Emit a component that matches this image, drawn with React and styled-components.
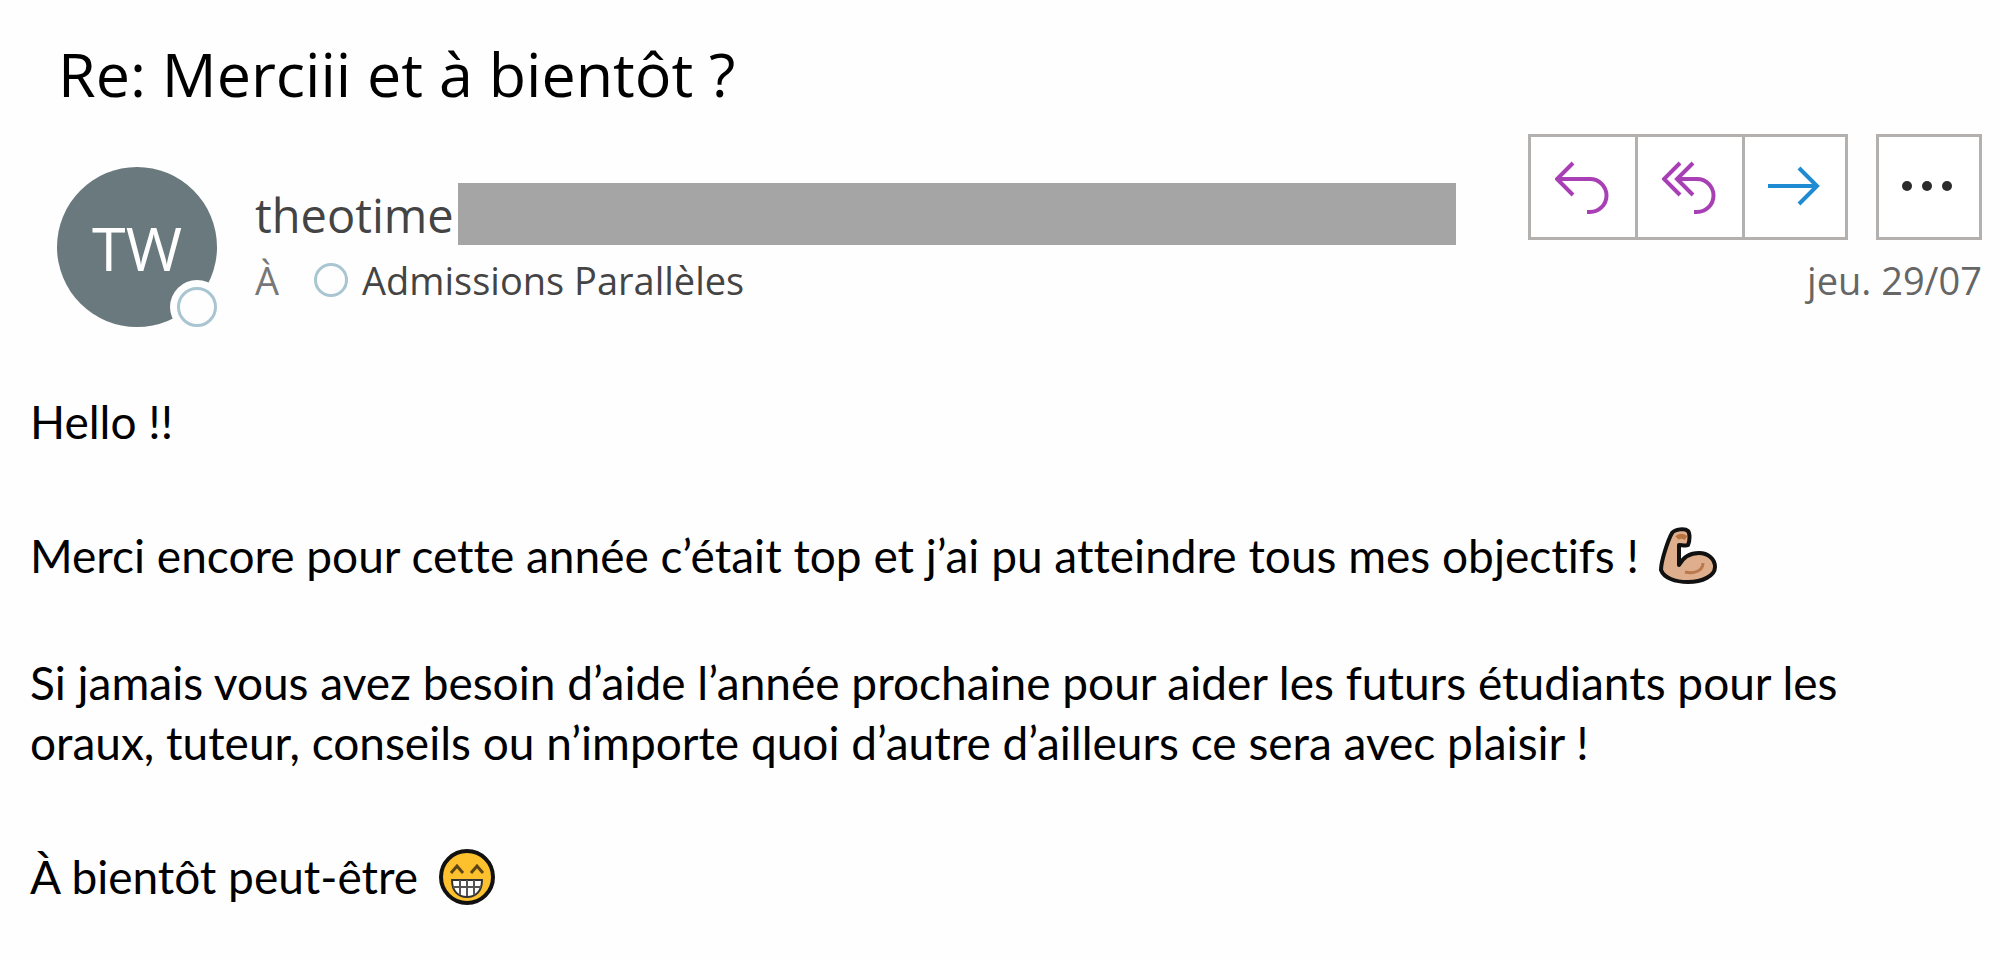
import React from "react";
import styled, { createGlobalStyle } from "styled-components";

const GlobalStyle = createGlobalStyle`
  * {
    box-sizing: border-box;
  }

  body {
    margin: 0;
    background: #fefefe;
    font-family: "Open Sans", "Noto Sans", sans-serif;
  }
`;

const Mail = styled.main`
  padding: 32px 17px 32px 30px;
`;

const Subject = styled.h1`
  margin: 0 0 0 28px;
  color: #000;
  font-size: 61px;
  font-weight: 400;
  line-height: 84px;
`;

const MailHeader = styled.header`
  display: flex;
  align-items: flex-start;
  margin-top: 18px;
  padding-left: 27px;
`;

const Avatar = styled.div`
  position: relative;
  display: flex;
  flex: none;
  align-items: center;
  justify-content: center;
  width: 160px;
  height: 160px;
  margin-top: 33px;
  border-radius: 50%;
  background: #69797e;
  color: #fff;
  font-size: 61px;
  font-weight: 400;
`;

const Presence = styled.span`
  flex: none;
  width: ${(props) => props.$size}px;
  height: ${(props) => props.$size}px;
  border: 3px solid #a9c5d2;
  border-radius: 50%;
  background: #fefefe;
`;

const AvatarPresence = styled(Presence)`
  position: absolute;
  right: 0;
  bottom: 0;
  box-shadow: 0 0 0 7px #fefefe;
`;

const Sender = styled.div`
  flex: 1;
  min-width: 0;
  margin: 49px 72px 0 38px;
`;

const From = styled.div`
  display: flex;
  align-items: flex-start;
  color: #444;
  font-size: 47px;
  line-height: 65px;
`;

const Redacted = styled.span`
  flex: 1;
  height: 62px;
  margin-left: 4px;
  background: #a5a5a5;
`;

const Recipients = styled.div`
  display: flex;
  align-items: center;
  color: #777;
  font-size: 38px;
  line-height: 64px;

  ${Presence} {
    margin: 0 14px 0 35px;
  }
`;

const Recipient = styled.span`
  color: #444;
`;

const Side = styled.div`
  display: flex;
  flex: none;
  flex-direction: column;
  align-items: flex-end;
`;

const Actions = styled.div`
  display: flex;
  gap: 28px;
`;

const ActionGroup = styled.div`
  display: flex;
`;

const ActionButton = styled.button`
  display: flex;
  align-items: center;
  justify-content: center;
  width: 106px;
  height: 106px;
  padding: 0;
  border: 3px solid #b3b0ad;
  background: #fff;
  color: ${(props) => props.$color};
  cursor: pointer;

  &:not(:last-child) {
    width: 110px;
  }

  & + & {
    margin-left: -3px;
  }
`;

const SentDate = styled.time`
  color: #666;
  font-size: 38px;
  line-height: 80px;
`;

const Body = styled.article`
  padding: 65px 40px 0 0;
  color: #000;
  font-family: Lato, "Open Sans", sans-serif;
  font-size: 46px;
  font-variant-ligatures: none;
  line-height: 60px;
`;

const Paragraph = styled.p`
  margin: ${(props) => (props.$withEmoji ? 74 : 67)}px 0 0;

  &:first-child {
    margin-top: 0;
  }
`;

const Emoji = styled.svg`
  width: 58px;
  height: 58px;
  margin: -10px 0 -12px 8px;
  vertical-align: baseline;
`;

const ReplyIcon = () => (
  <svg width="56" height="56" viewBox="0 0 56 56" fill="none" stroke="currentColor" strokeWidth="4">
    <path d="M18 4 2 20l16 16M2 20h33a16.5 16.5 0 0 1 0 33h-3" />
  </svg>
);

const ReplyAllIcon = () => (
  <svg width="56" height="56" viewBox="0 0 56 56" fill="none" stroke="currentColor" strokeWidth="4">
    <path d="M18 4 2 20l16 16M31 4 15 20l16 16M15 20h20a16.5 16.5 0 0 1 0 33h-3" />
  </svg>
);

const ForwardIcon = () => (
  <svg width="56" height="56" viewBox="0 0 56 56" fill="none" stroke="currentColor" strokeWidth="4">
    <path d="M1 27h48M32 9l18 18-18 18" />
  </svg>
);

const MoreIcon = () => (
  <svg width="56" height="56" viewBox="0 0 56 56" fill="currentColor">
    <circle cx="6" cy="27" r="5" />
    <circle cx="26" cy="27" r="5" />
    <circle cx="46" cy="27" r="5" />
  </svg>
);

const BicepsEmoji = () => (
  <Emoji viewBox="0 0 58 58" role="img" aria-label="Biceps">
    <path
      d="M13 6c3-4 13-5 16-2 2 2 2 10 0 14-2 1-6 0-9 0v20c5-9 13-12 20-12 9 0 16 6 16 14 0 9-13 15-27 15-13 0-24-4-27-12C2 34 9 13 13 6z"
      fill="#dfae8d"
      stroke="#111"
      strokeWidth="4"
      strokeLinejoin="round"
    />
    <path d="M18 11c3-3 6-2 9 0" fill="none" stroke="#b9733f" strokeWidth="5" />
    <path d="M26 45c9 2 18-1 18-9" fill="none" stroke="#b9794c" strokeWidth="3" />
  </Emoji>
);

const GrinEmoji = () => (
  <Emoji viewBox="0 0 58 58" role="img" aria-label="Grand sourire">
    <circle cx="29" cy="29" r="26" fill="#fcc12d" stroke="#111" strokeWidth="4" />
    <path d="M13 25l6-7 6 7M33 25l6-7 6 7" fill="none" stroke="#5e4515" strokeWidth="3" />
    <path d="M14 32h30c0 11-6 17-15 17s-15-6-15-17z" fill="#fff" stroke="#333" strokeWidth="2" />
    <path d="M15 39h28M22 32v15M29 32v16M36 32v15" stroke="#555" strokeWidth="2" />
  </Emoji>
);

const App = () => {
  return (
    <>
      <GlobalStyle />
      <Mail>
        <Subject>Re: Merciii et à bientôt ?</Subject>
        <MailHeader>
          <Avatar>
            TW
            <AvatarPresence $size={40} />
          </Avatar>
          <Sender>
            <From>
              <span>theotime</span>
              <Redacted />
            </From>
            <Recipients>
              <span>À</span>
              <Presence $size={34} />
              <Recipient>Admissions Parallèles</Recipient>
            </Recipients>
          </Sender>
          <Side>
            <Actions>
              <ActionGroup>
                <ActionButton $color="#a93fb5" aria-label="Répondre">
                  <ReplyIcon />
                </ActionButton>
                <ActionButton $color="#a93fb5" aria-label="Répondre à tous">
                  <ReplyAllIcon />
                </ActionButton>
                <ActionButton $color="#1e8bd2" aria-label="Transférer">
                  <ForwardIcon />
                </ActionButton>
              </ActionGroup>
              <ActionButton $color="#2b2b2b" aria-label="Autres actions">
                <MoreIcon />
              </ActionButton>
            </Actions>
            <SentDate>jeu. 29/07</SentDate>
          </Side>
        </MailHeader>
        <Body>
          <Paragraph>Hello !!</Paragraph>
          <Paragraph $withEmoji>
            Merci encore pour cette année c’était top et j’ai pu atteindre tous mes objectifs ! <BicepsEmoji />
          </Paragraph>
          <Paragraph>
            Si jamais vous avez besoin d’aide l’année prochaine pour aider les futurs étudiants pour les
            oraux, tuteur, conseils ou n’importe quoi d’autre d’ailleurs ce sera avec plaisir !
          </Paragraph>
          <Paragraph $withEmoji>
            À bientôt peut-être <GrinEmoji />
          </Paragraph>
        </Body>
      </Mail>
    </>
  );
};

export default App;
